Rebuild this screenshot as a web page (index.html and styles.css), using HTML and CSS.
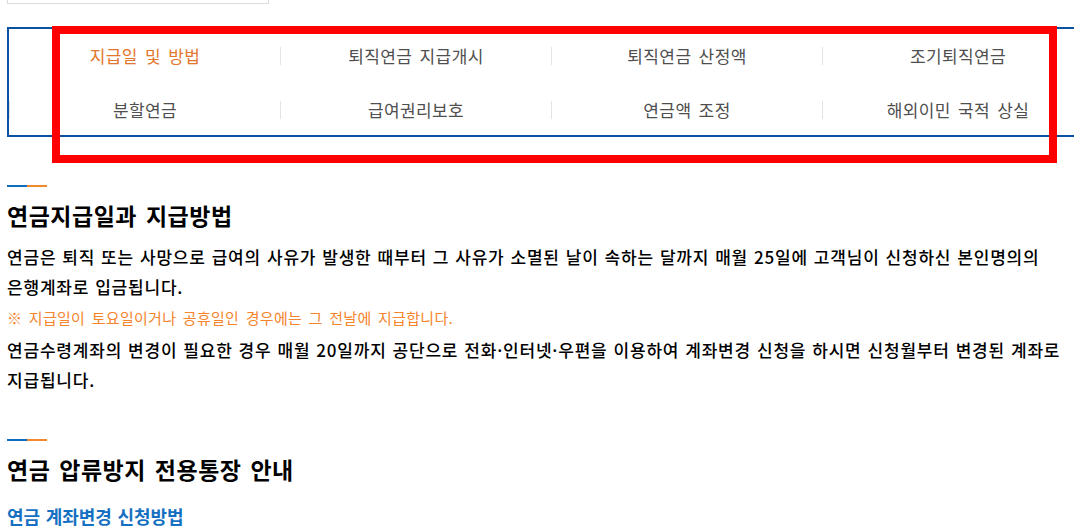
FILE: index.html
```html
<!DOCTYPE html>
<html lang="ko">
<head>
<meta charset="utf-8">
<title>연금지급일과 지급방법</title>
<link rel="stylesheet" href="styles.css">
</head>
<body>
<div class="page">
  <div class="search-stub"></div>

  <nav class="tabs">
    <ul class="tab-list">
      <li class="tab active"><a href="#">지급일 및 방법</a></li>
      <li class="tab"><a href="#">퇴직연금 지급개시</a></li>
      <li class="tab"><a href="#">퇴직연금 산정액</a></li>
      <li class="tab"><a href="#">조기퇴직연금</a></li>
      <li class="tab"><a href="#">분할연금</a></li>
      <li class="tab"><a href="#">급여권리보호</a></li>
      <li class="tab"><a href="#">연금액 조정</a></li>
      <li class="tab"><a href="#">해외이민 국적 상실</a></li>
    </ul>
  </nav>

  <section class="section first">
    <span class="deco"></span>
    <h2 class="section-title">연금지급일과 지급방법</h2>
    <p class="text">연금은 퇴직 또는 사망으로 급여의 사유가 발생한 때부터 그 사유가 소멸된 날이 속하는 달까지 매월 25일에 고객님이 신청하신 본인명의의 은행계좌로 입금됩니다.</p>
    <p class="note">※ 지급일이 토요일이거나 공휴일인 경우에는 그 전날에 지급합니다.</p>
    <p class="text gap">연금수령계좌의 변경이 필요한 경우 매월 20일까지 공단으로 전화·인터넷·우편을 이용하여 계좌변경 신청을 하시면 신청월부터 변경된 계좌로 지급됩니다.</p>
  </section>

  <section class="section second">
    <span class="deco"></span>
    <h2 class="section-title">연금 압류방지 전용통장 안내</h2>
    <h3 class="sub-title">연금 계좌변경 신청방법</h3>
  </section>

  <div class="highlight"></div>
</div>
</body>
</html>
```

FILE: styles.css
```css
html {
  overflow-x: hidden;
}

body {
  margin: 0;
  background: #ffffff;
  font-family: "Noto Sans CJK KR", "Noto Sans", sans-serif;
  color: #111111;
  word-break: keep-all;
}

.page {
  position: relative;
  width: 1088px;
  padding-left: 7px;
}

.search-stub {
  width: 260px;
  height: 3px;
  border: 1px solid #dcdcdc;
  border-top: none;
}

.tabs {
  margin-top: 23px;
  border: 2px solid #0a52a0;
  padding: 18px 0 16px;
}

.tab-list {
  list-style: none;
  margin: 0;
  padding: 0;
  display: grid;
  grid-template-columns: repeat(4, 271px);
  row-gap: 36px;
}

.tab {
  height: 18px;
  line-height: 18px;
  text-align: center;
  border-left: 1px solid #e3e3e3;
}

.tab:first-child {
  border-left-color: transparent;
}

.tab a {
  font-size: 17px;
  letter-spacing: 0.4px;
  word-spacing: 2px;
  color: #4f4f4f;
  text-decoration: none;
}

.tab.active a {
  color: #e2762e;
}

.section {
  display: flex;
  flex-direction: column;
}

.section.first {
  margin-top: 48px;
}

.section.second {
  margin-top: 44px;
}

.deco {
  display: block;
  width: 40px;
  height: 2px;
  background: linear-gradient(to right, #0f6bbd 0 20px, #f28a2c 20px 40px);
}

.section-title {
  margin: 13px 0 0;
  font-size: 23px;
  line-height: 30px;
  font-weight: 700;
  letter-spacing: 0.5px;
  word-spacing: 2px;
  color: #000000;
}

.text {
  margin: 12px 0 0;
  font-size: 17px;
  line-height: 30px;
  font-weight: 500;
  letter-spacing: 0.8px;
  word-spacing: 0.4px;
  color: #000000;
}

.text.gap {
  margin-top: 2px;
}

.note {
  margin: 0;
  font-size: 15px;
  line-height: 31px;
  letter-spacing: 0.3px;
  word-spacing: 2px;
  color: #f5842c;
}

.sub-title {
  margin: 17px 0 0;
  font-size: 18px;
  line-height: 30px;
  font-weight: 700;
  word-spacing: 0.5px;
  color: #1570c2;
}

.highlight {
  position: absolute;
  left: 52px;
  top: 26px;
  width: 1005px;
  height: 137px;
  box-sizing: border-box;
  border: 8px solid #ff0000;
  pointer-events: none;
}
```
